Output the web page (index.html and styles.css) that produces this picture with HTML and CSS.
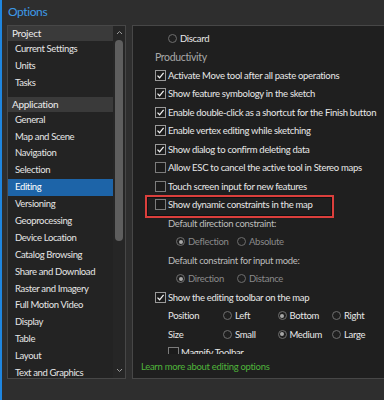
FILE: index.html
```html
<!DOCTYPE html>
<html>
<head>
<meta charset="utf-8">
<link rel="stylesheet" href="styles.css">
</head>
<body>
<div class="window">
  <div class="title">Options</div>
  <div class="main">
    <div class="nav">
      <div class="navlist">
        <div class="group">Project</div>
        <div class="item">Current Settings</div>
        <div class="item">Units</div>
        <div class="item">Tasks</div>
        <div class="group group-gap">Application</div>
        <div class="item">General</div>
        <div class="item">Map and Scene</div>
        <div class="item">Navigation</div>
        <div class="item">Selection</div>
        <div class="item selected">Editing</div>
        <div class="item">Versioning</div>
        <div class="item">Geoprocessing</div>
        <div class="item">Device Location</div>
        <div class="item">Catalog Browsing</div>
        <div class="item">Share and Download</div>
        <div class="item">Raster and Imagery</div>
        <div class="item">Full Motion Video</div>
        <div class="item">Display</div>
        <div class="item">Table</div>
        <div class="item">Layout</div>
        <div class="item">Text and Graphics</div>
      </div>
      <div class="scrollbar">
        <svg class="arrow" width="7" height="5" viewBox="0 0 7 5"><path d="M1 4 L3.5 1.5 L6 4" fill="none" stroke="#9a9a9a" stroke-width="1"/></svg>
        <div class="thumb"></div>
        <div class="spacer"></div>
        <svg class="arrow" width="7" height="5" viewBox="0 0 7 5"><path d="M1 1 L3.5 3.5 L6 1" fill="none" stroke="#9a9a9a" stroke-width="1"/></svg>
      </div>
    </div>
    <div class="content">
      <div class="scroll">
        <div class="row indent1"><span class="radio"></span><span>Discard</span></div>
        <div class="row heading">Productivity</div>
        <div class="row"><span class="check on"><svg width="9" height="9" viewBox="0 0 9 9"><path d="M1.5 4.6 L3.6 6.8 L7.6 1.8" fill="none" stroke="#f0f0f0" stroke-width="1.3"/></svg></span><span>Activate Move tool after all paste operations</span></div>
        <div class="row"><span class="check on"><svg width="9" height="9" viewBox="0 0 9 9"><path d="M1.5 4.6 L3.6 6.8 L7.6 1.8" fill="none" stroke="#f0f0f0" stroke-width="1.3"/></svg></span><span>Show feature symbology in the sketch</span></div>
        <div class="row"><span class="check on"><svg width="9" height="9" viewBox="0 0 9 9"><path d="M1.5 4.6 L3.6 6.8 L7.6 1.8" fill="none" stroke="#f0f0f0" stroke-width="1.3"/></svg></span><span>Enable double-click as a shortcut for the Finish button</span></div>
        <div class="row"><span class="check on"><svg width="9" height="9" viewBox="0 0 9 9"><path d="M1.5 4.6 L3.6 6.8 L7.6 1.8" fill="none" stroke="#f0f0f0" stroke-width="1.3"/></svg></span><span>Enable vertex editing while sketching</span></div>
        <div class="row"><span class="check on"><svg width="9" height="9" viewBox="0 0 9 9"><path d="M1.5 4.6 L3.6 6.8 L7.6 1.8" fill="none" stroke="#f0f0f0" stroke-width="1.3"/></svg></span><span>Show dialog to confirm deleting data</span></div>
        <div class="row"><span class="check"></span><span>Allow ESC to cancel the active tool in Stereo maps</span></div>
        <div class="row"><span class="check"></span><span>Touch screen input for new features</span></div>
        <div class="row highlight"><span class="check"></span><span>Show dynamic constraints in the map</span><div class="redbox"></div></div>
        <div class="row indent2 label">Default direction constraint:</div>
        <div class="row indent3 disabled">
          <span class="opt"><span class="radio on"></span><span>Deflection</span></span>
          <span class="opt"><span class="radio"></span><span>Absolute</span></span>
        </div>
        <div class="row indent2 label">Default constraint for input mode:</div>
        <div class="row indent3 disabled">
          <span class="opt"><span class="radio on"></span><span>Direction</span></span>
          <span class="opt"><span class="radio"></span><span>Distance</span></span>
        </div>
        <div class="row"><span class="check on"><svg width="9" height="9" viewBox="0 0 9 9"><path d="M1.5 4.6 L3.6 6.8 L7.6 1.8" fill="none" stroke="#f0f0f0" stroke-width="1.3"/></svg></span><span>Show the editing toolbar on the map</span></div>
        <div class="row indent2 grid">
          <span class="glabel">Position</span>
          <span class="gopt"><span class="radio"></span><span>Left</span></span>
          <span class="gopt"><span class="radio on"></span><span>Bottom</span></span>
          <span class="gopt"><span class="radio"></span><span>Right</span></span>
        </div>
        <div class="row indent2 grid">
          <span class="glabel">Size</span>
          <span class="gopt"><span class="radio"></span><span>Small</span></span>
          <span class="gopt"><span class="radio on"></span><span>Medium</span></span>
          <span class="gopt"><span class="radio"></span><span>Large</span></span>
        </div>
        <div class="row indent2"><span class="check"></span><span>Magnify Toolbar</span></div>
      </div>
      <div class="learn">Learn more about editing options</div>
    </div>
  </div>
</div>
</body>
</html>
```
FILE: styles.css
```css
html, body {
  margin: 0;
  padding: 0;
}
body {
  width: 384px;
  height: 400px;
  overflow: hidden;
  background: #2e2e2e;
  font-family: Lato, "Open Sans", sans-serif;
  font-size: 9.5px;
  letter-spacing: -0.3px;
  color: #e8e8e8;
}
.window {
  height: 400px;
  border-left: 2px solid #1f86e0;
  box-sizing: border-box;
}
.title {
  height: 25px;
  box-sizing: border-box;
  padding: 4px 0 0 6px;
  font-size: 12px;
  letter-spacing: -0.4px;
  color: #3d9ae8;
  line-height: 16px;
}
.main {
  display: flex;
  gap: 6px;
  padding-left: 5px;
}
.nav {
  width: 119px;
  height: 354px;
  box-sizing: border-box;
  border: 1px solid #474747;
  background: #232323;
  display: flex;
  flex-shrink: 0;
}
.navlist {
  width: 105px;
  overflow: hidden;
}
.group {
  height: 15px;
  line-height: 15px;
  background: #3a3a3a;
  padding-left: 4px;
  font-size: 10px;
  color: #ececec;
}
.group-gap {
  margin-top: 5px;
}
.item {
  height: 16.9px;
  line-height: 16.9px;
  padding-left: 7px;
  white-space: nowrap;
  color: #e6e6e6;
  letter-spacing: -0.35px;
}
.item.selected {
  background: #1d64a8;
  color: #ffffff;
}
.scrollbar {
  width: 12px;
  background: #262626;
  display: flex;
  flex-direction: column;
  align-items: center;
  padding: 4px 0 5px;
  box-sizing: border-box;
}
.arrow {
  display: block;
  flex-shrink: 0;
}
.thumb {
  width: 8px;
  height: 201px;
  margin-top: 5px;
  border-radius: 4px;
  background: #5e5e5e;
  flex-shrink: 0;
}
.spacer {
  flex: 1;
}
.content {
  width: 260px;
  height: 354px;
  box-sizing: border-box;
  border: 1px solid #474747;
  border-right: none;
  background: #1f1f1f;
  flex-shrink: 0;
  display: flex;
  flex-direction: column;
}
.scroll {
  height: 328px;
  overflow: hidden;
  padding: 2.75px 0 0 22px;
  box-sizing: border-box;
}
.row {
  height: 18.5px;
  display: flex;
  align-items: center;
  white-space: nowrap;
  position: relative;
}
.indent1 {
  padding-left: 13px;
}
.indent2 {
  padding-left: 13px;
}
.indent3 {
  padding-left: 21px;
}
.heading {
  font-size: 10.5px;
  letter-spacing: -0.35px;
  color: #a9a9a9;
}
.label {
  color: #bdbdbd;
}
.disabled {
  color: #8a8a8a;
}
.check {
  width: 11px;
  height: 11px;
  box-sizing: border-box;
  border: 1px solid #7c7c7c;
  background: #1b1b1b;
  margin-right: 2px;
  display: flex;
  align-items: center;
  justify-content: center;
  flex-shrink: 0;
}
.check.on {
  border-color: #9a9a9a;
}
.check svg {
  display: block;
}
.radio {
  width: 9px;
  height: 9px;
  box-sizing: border-box;
  border: 1px solid #6e6e6e;
  border-radius: 50%;
  margin-right: 3px;
  display: flex;
  align-items: center;
  justify-content: center;
  flex-shrink: 0;
}
.radio.on::after {
  content: "";
  width: 4px;
  height: 4px;
  border-radius: 50%;
  background: #a8a8a8;
}
.opt {
  display: flex;
  align-items: center;
  width: 61px;
}
.grid .glabel {
  width: 55px;
}
.gopt {
  display: flex;
  align-items: center;
  width: 54.5px;
}
.gopt .radio {
  margin-right: 3px;
}
.redbox {
  position: absolute;
  left: -10px;
  top: -0.5px;
  width: 189px;
  height: 23px;
  box-sizing: border-box;
  border: 2px solid #db3f3c;
  box-shadow: inset 0 0 0 1px #111111;
}
.learn {
  flex: 1;
  display: flex;
  align-items: center;
  padding-left: 8px;
  color: #4fb43b;
}
```
